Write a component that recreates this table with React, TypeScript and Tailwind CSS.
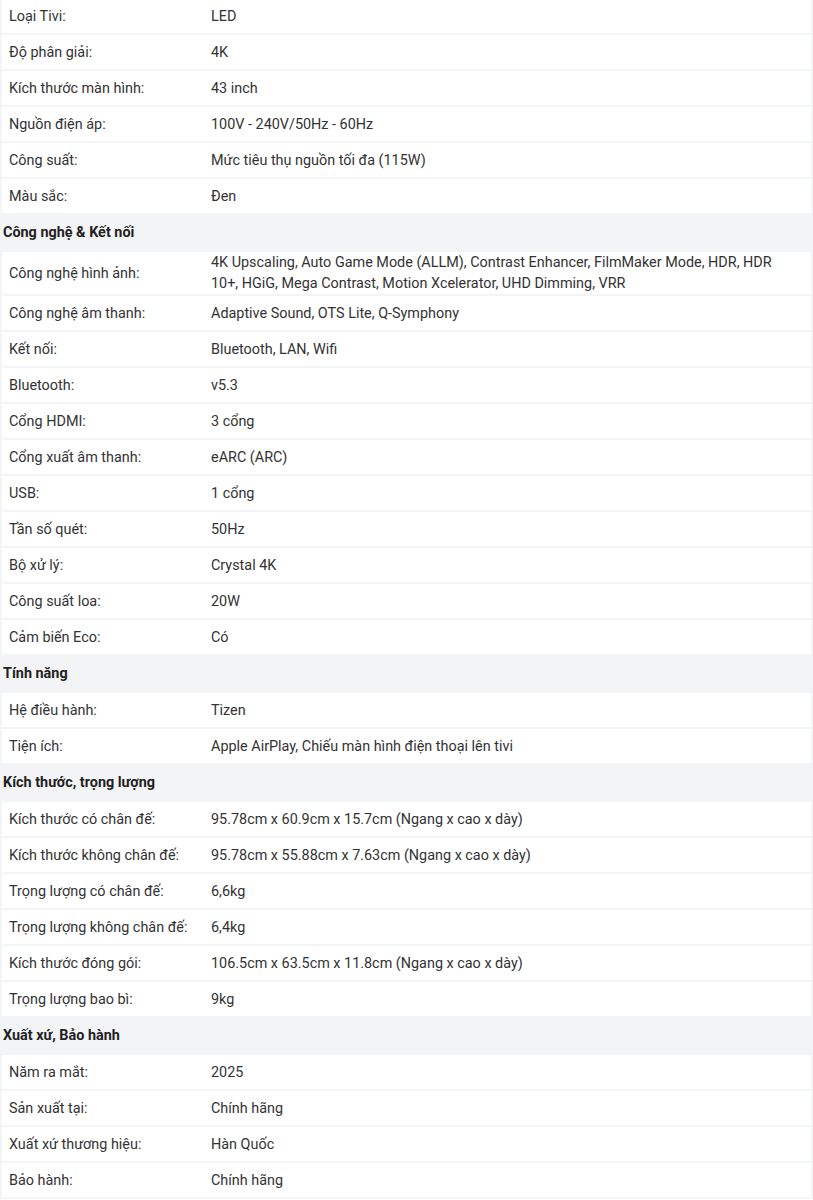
type Item = { label: string; value: string };
type Section = { title?: string; items: Item[] };

const sections: Section[] = [
  {
    items: [
      { label: "Loại Tivi:", value: "LED" },
      { label: "Độ phân giải:", value: "4K" },
      { label: "Kích thước màn hình:", value: "43 inch" },
      { label: "Nguồn điện áp:", value: "100V - 240V/50Hz - 60Hz" },
      { label: "Công suất:", value: "Mức tiêu thụ nguồn tối đa (115W)" },
      { label: "Màu sắc:", value: "Đen" },
    ],
  },
  {
    title: "Công nghệ & Kết nối",
    items: [
      {
        label: "Công nghệ hình ảnh:",
        value:
          "4K Upscaling, Auto Game Mode (ALLM), Contrast Enhancer, FilmMaker Mode, HDR, HDR 10+, HGiG, Mega Contrast, Motion Xcelerator, UHD Dimming, VRR",
      },
      { label: "Công nghệ âm thanh:", value: "Adaptive Sound, OTS Lite, Q-Symphony" },
      { label: "Kết nối:", value: "Bluetooth, LAN, Wifi" },
      { label: "Bluetooth:", value: "v5.3" },
      { label: "Cổng HDMI:", value: "3 cổng" },
      { label: "Cổng xuất âm thanh:", value: "eARC (ARC)" },
      { label: "USB:", value: "1 cổng" },
      { label: "Tần số quét:", value: "50Hz" },
      { label: "Bộ xử lý:", value: "Crystal 4K" },
      { label: "Công suất loa:", value: "20W" },
      { label: "Cảm biến Eco:", value: "Có" },
    ],
  },
  {
    title: "Tính năng",
    items: [
      { label: "Hệ điều hành:", value: "Tizen" },
      { label: "Tiện ích:", value: "Apple AirPlay, Chiếu màn hình điện thoại lên tivi" },
    ],
  },
  {
    title: "Kích thước, trọng lượng",
    items: [
      { label: "Kích thước có chân đế:", value: "95.78cm x 60.9cm x 15.7cm (Ngang x cao x dày)" },
      { label: "Kích thước không chân đế:", value: "95.78cm x 55.88cm x 7.63cm (Ngang x cao x dày)" },
      { label: "Trọng lượng có chân đế:", value: "6,6kg" },
      { label: "Trọng lượng không chân đế:", value: "6,4kg" },
      { label: "Kích thước đóng gói:", value: "106.5cm x 63.5cm x 11.8cm (Ngang x cao x dày)" },
      { label: "Trọng lượng bao bì:", value: "9kg" },
    ],
  },
  {
    title: "Xuất xứ, Bảo hành",
    items: [
      { label: "Năm ra mắt:", value: "2025" },
      { label: "Sản xuất tại:", value: "Chính hãng" },
      { label: "Xuất xứ thương hiệu:", value: "Hàn Quốc" },
      { label: "Bảo hành:", value: "Chính hãng" },
    ],
  },
];

function SpecRow({ item }: { item: Item }) {
  return (
    <div className="flex items-center min-h-[34px] mx-[2px] mb-[2px] bg-white text-[14.4px] leading-[21px] text-[#333]">
      <div className="w-[209px] shrink-0 pl-[7px]">{item.label}</div>
      <div className="flex-1 pr-[20px]">{item.value}</div>
    </div>
  );
}

export default function App() {
  return (
    <div
      className="w-[813px] h-[1200px] overflow-hidden bg-[#f3f4f6] -mt-[1px]"
      style={{ fontFamily: "Roboto, 'Noto Sans', sans-serif" }}
    >
      {sections.map((s, i) => (
        <div key={i}>
          {s.title && (
            <div className="h-[35px] mb-[2px] flex items-center pl-[3px] text-[14.4px] font-bold text-[#222]">
              {s.title}
            </div>
          )}
          {s.items.map((it) => (
            <SpecRow key={it.label} item={it} />
          ))}
        </div>
      ))}
    </div>
  );
}
